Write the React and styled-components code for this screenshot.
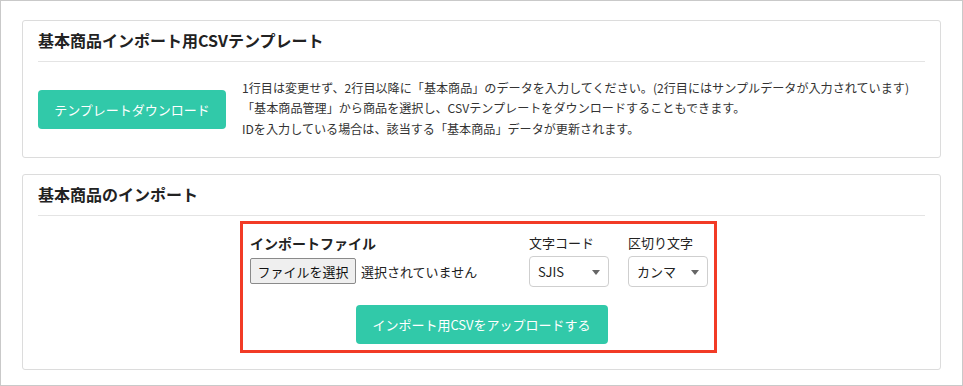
import React from "react";
import styled, { createGlobalStyle } from "styled-components";

const GlobalStyle = createGlobalStyle`
  html, body { margin: 0; padding: 0; background: #fff; }
  body {
    font-family: "Noto Sans CJK JP", "Noto Sans", sans-serif;
    color: #333;
  }
  * { box-sizing: border-box; }
`;

const Frame = styled.div`
  width: 963px;
  height: 386px;
  border: 1px solid #c9c9c9;
  padding: 19px 21px 0;
  display: flex;
  flex-direction: column;
  gap: 16px;
  background: #fff;
`;

const Card = styled.section`
  border: 1px solid #dcdcdc;
  border-radius: 3px;
  background: #fff;
`;

const CardHeader = styled.h2`
  margin: 0 15px;
  height: 41px;
  display: flex;
  align-items: center;
  border-bottom: 1px solid #e4e4e4;
  font-size: 16px;
  font-weight: 700;
  color: #222;
  padding-bottom: 3px;
`;

const TemplateBody = styled.div`
  display: flex;
  align-items: center;
  gap: 16px;
  height: 95px;
  padding: 0 15px;
`;

const GreenButton = styled.button`
  flex: none;
  width: ${(p) => p.$w}px;
  height: 39px;
  border: none;
  border-radius: 4px;
  background: #31c9a9;
  color: #fff;
  font-family: inherit;
  font-size: ${(p) => p.$fs}px;
  cursor: pointer;
  padding: 0;
`;

const Notes = styled.div`
  font-size: 12.1px;
  line-height: 20.5px;
  color: #333;
  margin-top: -2px;
`;

const ImportBody = styled.div`
  display: flex;
  justify-content: center;
  padding: 5px 21px 16px 15px;
`;

const Highlight = styled.div`
  width: 477px;
  border: 3px solid #f23b26;
  padding: 9px 6px 6px 7px;
  display: flex;
  flex-direction: column;
  gap: 18px;
`;

const FieldRow = styled.div`
  display: flex;
  align-items: flex-start;
`;

const FileField = styled.div`
  flex: 1;
  display: flex;
  flex-direction: column;
`;

const SelectGroup = styled.div`
  display: flex;
  gap: 19px;
`;

const SelectField = styled.div`
  display: flex;
  flex-direction: column;
  gap: 3px;
`;

const Label = styled.div`
  font-size: ${(p) => (p.$bold ? 14 : 13)}px;
  font-weight: ${(p) => (p.$bold ? 700 : 400)};
  line-height: 20px;
  color: #222;
`;

const FileRow = styled.div`
  display: flex;
  align-items: center;
  gap: 5px;
  margin-top: 5px;
`;

const FileButton = styled.button`
  height: 26px;
  width: 106px;
  padding: 0;
  border: 1px solid #8a8a8a;
  border-radius: 2px;
  background: #efefef;
  font-family: inherit;
  font-size: 13px;
  color: #111;
`;

const FileStatus = styled.span`
  font-size: 13px;
  color: #222;
`;

const SelectBox = styled.div`
  position: relative;
  width: 80px;
  height: 31px;
  border: 1px solid #cfcfcf;
  border-radius: 4px;
  background: #fff;
  display: flex;
  align-items: center;
  padding-left: 8px;
  font-size: 13px;
  color: #222;

  &::after {
    content: "";
    position: absolute;
    right: 8px;
    top: 13px;
    border-left: 4px solid transparent;
    border-right: 4px solid transparent;
    border-top: 5px solid #666;
  }
`;

const ButtonRow = styled.div`
  display: flex;
  justify-content: center;
  padding-left: 5px;
`;

export default function App() {
  return (
    <>
      <GlobalStyle />
      <Frame>
        <Card>
          <CardHeader>基本商品インポート用CSVテンプレート</CardHeader>
          <TemplateBody>
            <GreenButton $w={188} $fs={13}>テンプレートダウンロード</GreenButton>
            <Notes>
              <div>1行目は変更せず、2行目以降に「基本商品」のデータを入力してください。(2行目にはサンプルデータが入力されています)</div>
              <div>「基本商品管理」から商品を選択し、CSVテンプレートをダウンロードすることもできます。</div>
              <div>IDを入力している場合は、該当する「基本商品」データが更新されます。</div>
            </Notes>
          </TemplateBody>
        </Card>
        <Card>
          <CardHeader>基本商品のインポート</CardHeader>
          <ImportBody>
            <Highlight>
              <FieldRow>
                <FileField>
                  <Label $bold>インポートファイル</Label>
                  <FileRow>
                    <FileButton>ファイルを選択</FileButton>
                    <FileStatus>選択されていません</FileStatus>
                  </FileRow>
                </FileField>
                <SelectGroup>
                  <SelectField>
                    <Label>文字コード</Label>
                    <SelectBox>SJIS</SelectBox>
                  </SelectField>
                  <SelectField>
                    <Label>区切り文字</Label>
                    <SelectBox>カンマ</SelectBox>
                  </SelectField>
                </SelectGroup>
              </FieldRow>
              <ButtonRow>
                <GreenButton $w={252} $fs={13}>インポート用CSVをアップロードする</GreenButton>
              </ButtonRow>
            </Highlight>
          </ImportBody>
        </Card>
      </Frame>
    </>
  );
}
